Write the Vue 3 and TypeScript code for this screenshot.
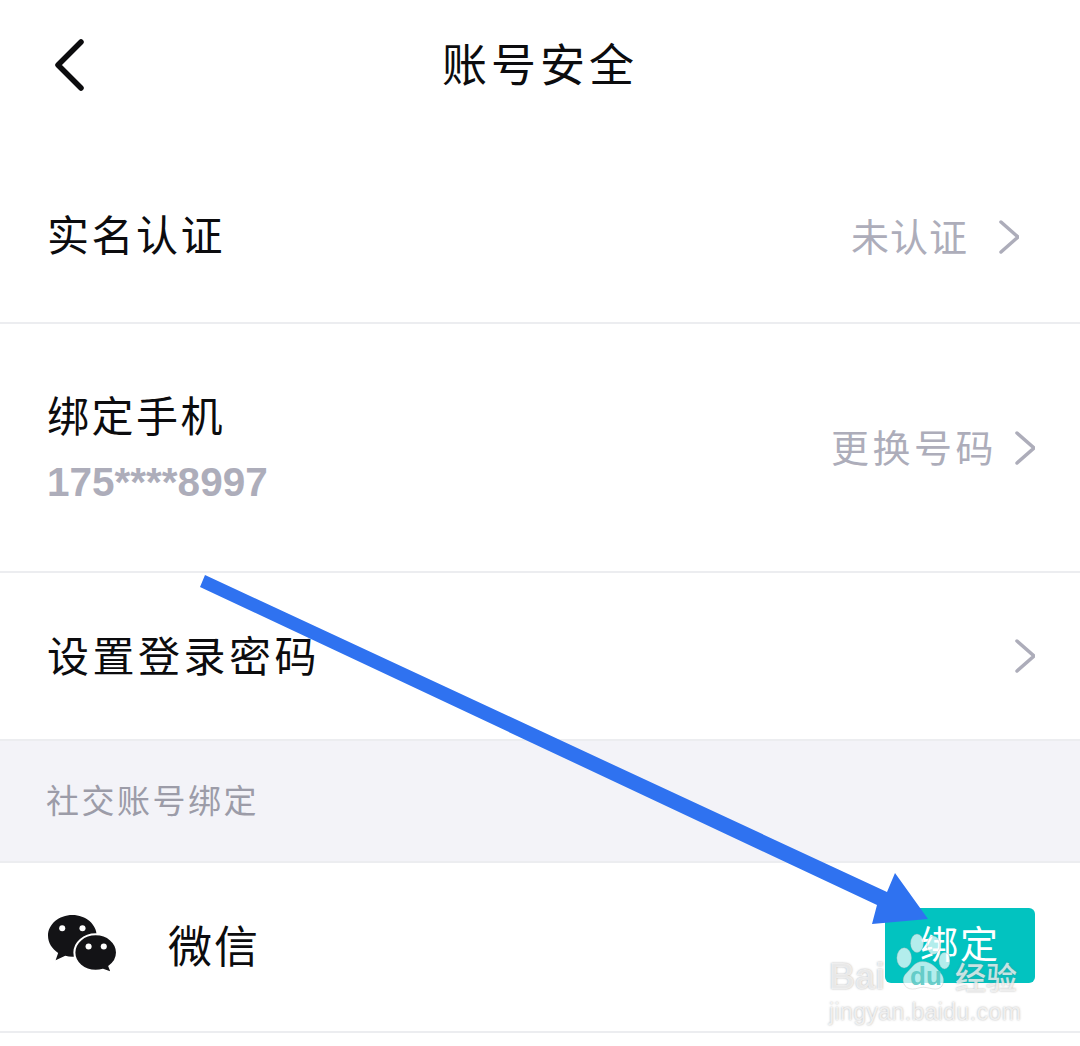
<template>
  <div class="page">
    <header class="topbar">
      <svg class="back" viewBox="0 0 34 54" fill="none">
        <polyline points="29,4 6,27 29,50" />
      </svg>
      <h1 class="title">账号安全</h1>
    </header>

    <section class="row row--auth">
      <span class="label label--auth">实名认证</span>
      <span class="right right--auth">
        <span class="hint hint--auth">未认证</span>
        <svg class="chevron" viewBox="0 0 24 36" fill="none"><polyline points="6,3 23,18 6,33" /></svg>
      </span>
    </section>

    <section class="row row--phone">
      <div class="phone-text">
        <span class="label">绑定手机</span>
        <span class="number">175****8997</span>
      </div>
      <span class="right">
        <span class="hint">更换号码</span>
        <svg class="chevron" viewBox="0 0 24 36" fill="none"><polyline points="6,3 23,18 6,33" /></svg>
      </span>
    </section>

    <section class="row row--password">
      <span class="label label--password">设置登录密码</span>
      <span class="right">
        <svg class="chevron" viewBox="0 0 24 36" fill="none"><polyline points="6,3 23,18 6,33" /></svg>
      </span>
    </section>

    <div class="section-title">社交账号绑定</div>

    <section class="row row--wechat">
      <div class="wechat">
        <svg class="wechat-icon" viewBox="0 0 71 60">
          <path class="bubble" d="M25 0C11.700 0 1 9.200 1 20.500c0 7 4 13 10 16.800L8.500 44.500l9.500-4.500c2.300.6 4.600 1 7 1 13.300 0 24-9.200 24-20.500S38.300 0 25 0z" />
          <path class="bubble bubble--front" d="M69 37c0-10-9.400-18-21-18s-21 8-21 18 9.400 18 21 18c2.600 0 5-.4 7.300-1.100L64 57l-2.500-6.500C66.200 47.200 69 42.400 69 37z" />
          <circle class="eye" cx="15" cy="13" r="3" />
          <circle class="eye" cx="35" cy="13" r="3" />
          <circle class="eye" cx="41" cy="31" r="3" />
          <circle class="eye" cx="56" cy="31" r="3" />
        </svg>
        <span class="label label--wechat">微信</span>
      </div>
      <button class="bind">绑定</button>
    </section>

    <!-- arrow drawn over the screenshot -->
    <svg class="arrow" viewBox="0 0 1080 1046">
      <polygon points="205,575 887,892 895,873 928,919 872,924 877,905 200,587" />
    </svg>

    <!-- watermark -->
    <div class="watermark">
      <div class="wm-top">
        <span class="wm-bai">Bai</span>
        <div class="wm-logo">
          <svg class="wm-paw" viewBox="0 0 60 64">
            <ellipse cx="10" cy="27" rx="8" ry="11" />
            <ellipse cx="24" cy="11" rx="7" ry="10" />
            <ellipse cx="42" cy="13" rx="7" ry="10" />
            <ellipse cx="54" cy="30" rx="6" ry="9" />
            <path d="M30 31c-9 0-12 8-18 13-6 6-3 17 7 17 5 0 7-2 12-2s8 2 13 2c9 0 11-10 7-16-5-6-11-14-21-14z" />
          </svg>
          <span class="wm-du">du</span>
        </div>
        <span class="wm-cn">经验</span>
      </div>
      <div class="wm-url">jingyan.baidu.com</div>
    </div>
  </div>
</template>

<script setup lang="ts">
</script>

<style>
html,
body {
  background: #fff;
}
</style>

<style scoped>
.page {
  position: relative;
  width: 1080px;
  height: 1046px;
  overflow: hidden;
  background: #fff;
  font-family: "Noto Sans CJK SC", "Liberation Sans", sans-serif;
  color: #0c0c0e;
}

.topbar {
  display: flex;
  align-items: center;
  justify-content: center;
  position: relative;
  height: 130px;
}

.back {
  position: absolute;
  left: 52px;
  top: 38px;
  width: 34px;
  height: 54px;
}

.back polyline {
  stroke: #0c0c0e;
  stroke-width: 5.500;
  stroke-linecap: round;
  stroke-linejoin: round;
}

.title {
  margin: 0 0 6px;
  font-size: 45px;
  font-weight: 400;
  letter-spacing: 4px;
  line-height: 1;
}

.row {
  display: flex;
  align-items: center;
  justify-content: space-between;
  box-sizing: border-box;
  padding: 0 45px 0 47px;
  border-bottom: 2px solid #ecedf0;
}

.row--auth {
  height: 194px;
  padding-right: 61px;
  padding-top: 22px;
}

.row--phone {
  height: 249px;
}

.row--password {
  height: 168px;
}

.row--wechat {
  height: 170px;
}

.label {
  font-size: 42px;
  line-height: 1;
  letter-spacing: 2.500px;
  margin-bottom: 4px;
}

.label--auth {
  margin-bottom: 8px;
}

.label--password {
  letter-spacing: 3.500px;
}

.label--wechat {
  font-size: 44px;
  letter-spacing: 2px;
  margin-bottom: 3px;
}

.phone-text {
  display: flex;
  flex-direction: column;
  gap: 23px;
}

.number {
  font-family: "Liberation Sans", sans-serif;
  font-size: 40.500px;
  font-weight: 700;
  line-height: 1;
  color: #adadba;
}

.right {
  display: flex;
  align-items: center;
  gap: 14px;
}

.right--auth {
  gap: 27px;
}

.hint {
  font-size: 38px;
  line-height: 1;
  letter-spacing: 3.500px;
  color: #adadba;
  margin-bottom: 4px;
}

.hint--auth {
  letter-spacing: 1px;
}

.chevron {
  width: 24px;
  height: 36px;
}

.chevron polyline {
  stroke: #adadba;
  stroke-width: 3.500;
  stroke-linecap: round;
  stroke-linejoin: round;
}

.section-title {
  display: flex;
  align-items: center;
  box-sizing: border-box;
  height: 122px;
  padding: 0 0 5px 46px;
  background: #f3f3f8;
  border-bottom: 2px solid #ecedf0;
  font-size: 33px;
  letter-spacing: 2.500px;
  color: #9c9ca8;
}

.wechat {
  display: flex;
  align-items: center;
  gap: 49px;
  margin-bottom: 3px;
}

.wechat-icon {
  width: 72px;
  height: 61px;
}

.bubble {
  fill: #131316;
}

.bubble--front {
  stroke: #fff;
  stroke-width: 2;
}

.eye {
  fill: #fff;
}

.bind {
  width: 150px;
  height: 75px;
  margin-bottom: 4px;
  border: none;
  border-radius: 6px;
  background: #02c3c0;
  color: #fff;
  font-family: inherit;
  font-size: 38px;
  letter-spacing: 2px;
  line-height: 1;
  padding: 0 0 6px;
}

.arrow {
  position: absolute;
  inset: 0;
  width: 1080px;
  height: 1046px;
  pointer-events: none;
}

.arrow polygon {
  fill: #2f72f0;
}

.watermark {
  position: absolute;
  left: 829px;
  top: 932px;
  width: 200px;
  pointer-events: none;
  color: rgba(255, 255, 255, 0.72);
  text-shadow: 0 0 2px rgba(120, 120, 120, 0.6);
  font-family: "Liberation Sans", "Noto Sans CJK SC", sans-serif;
}

.wm-top {
  display: flex;
  align-items: flex-end;
  height: 61px;
}

.wm-bai {
  font-size: 36px;
  font-weight: 700;
  line-height: 1;
  margin-bottom: -2px;
}

.wm-logo {
  position: relative;
  width: 55px;
  height: 61px;
  margin-left: 10px;
}

.wm-paw {
  display: block;
  width: 55px;
  height: 61px;
  fill: rgba(255, 255, 255, 0.7);
  stroke: rgba(170, 170, 170, 0.35);
  stroke-width: 1;
}

.wm-du {
  position: absolute;
  left: 15px;
  bottom: 4px;
  font-size: 26px;
  font-weight: 700;
  line-height: 1;
  color: rgba(90, 200, 195, 0.9);
  text-shadow: none;
}

.wm-cn {
  font-family: "Noto Sans CJK SC", sans-serif;
  font-size: 31px;
  font-weight: 500;
  line-height: 1;
  margin-left: 5px;
  margin-bottom: 2px;
}

.wm-url {
  font-size: 23px;
  line-height: 1;
  margin-top: 8px;
  white-space: nowrap;
  letter-spacing: 0.400px;
}
</style>
